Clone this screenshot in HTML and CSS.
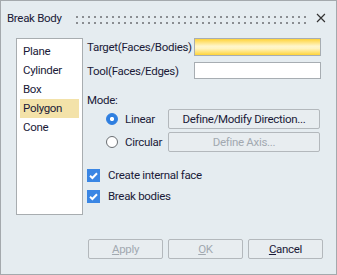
FILE: index.html
```html
<!DOCTYPE html>
<html lang="en">
<head>
    <meta charset="UTF-8">
    <title>Break Body</title>
    <link rel="stylesheet" href="styles.css">
</head>
<body>
    <div class="dialog">
        <div class="titlebar">
            <span class="title">Break Body</span>
            <svg class="grip" width="232" height="8">
                <defs>
                    <pattern id="dots" width="6" height="6" patternUnits="userSpaceOnUse">
                        <rect x="0" y="0" width="2" height="2" fill="#8a8d91"/>
                    </pattern>
                </defs>
                <rect width="232" height="8" fill="url(#dots)"/>
            </svg>
            <svg class="close" width="10" height="10" viewBox="0 0 10 10">
                <path d="M1 1 L9 9 M9 1 L1 9" stroke="#333" stroke-width="1.2" fill="none"/>
            </svg>
        </div>

        <div class="main">
            <ul class="shape-list">
                <li>Plane</li>
                <li>Cylinder</li>
                <li>Box</li>
                <li class="selected">Polygon</li>
                <li>Cone</li>
            </ul>

            <div class="panel">
                <div class="fields">
                    <label>Target(Faces/Bodies)</label>
                    <div class="input active"></div>
                    <label>Tool(Faces/Edges)</label>
                    <div class="input"></div>
                </div>

                <div class="mode-label">Mode:</div>
                <div class="mode-row">
                    <span class="radio checked"></span>
                    <span class="radio-text">Linear</span>
                    <button class="btn wide">Define/Modify Direction...</button>
                </div>
                <div class="mode-row">
                    <span class="radio"></span>
                    <span class="radio-text">Circular</span>
                    <button class="btn wide" disabled>Define Axis...</button>
                </div>

                <div class="check-row first">
                    <span class="checkbox"></span>
                    <span>Create internal face</span>
                </div>
                <div class="check-row">
                    <span class="checkbox"></span>
                    <span>Break bodies</span>
                </div>
            </div>
        </div>

        <div class="footer">
            <button class="btn" disabled><u>A</u>pply</button>
            <button class="btn" disabled><u>O</u>K</button>
            <button class="btn"><u>C</u>ancel</button>
        </div>
    </div>
</body>
</html>
```

FILE: styles.css
```css
body {
    margin: 0;
    font-family: Roboto, "Liberation Sans", sans-serif;
    font-size: 11.5px;
    letter-spacing: -0.3px;
    color: #1a1a38;
}
.dialog {
    width: 337px;
    height: 275px;
    box-sizing: border-box;
    border: 1px solid #a4a9ad;
    background: #e5ecf0;
}
.titlebar {
    height: 34px;
    display: flex;
    align-items: center;
    padding: 0 10px 0 6px;
}
.title {
    width: 70px;
}
.grip {
    display: block;
    margin-top: 3px;
    margin-right: 10px;
}
.close {
    display: block;
}
.main {
    display: flex;
    gap: 4px;
    padding: 3px 15px 0 15px;
    height: 177px;
}
.shape-list {
    list-style: none;
    margin: 0;
    padding: 3px 3px;
    width: 67px;
    box-sizing: border-box;
    background: #fff;
    border: 1px solid #a8adb0;
}
.shape-list li {
    height: 19px;
    line-height: 19px;
    padding-left: 3px;
}
.shape-list li.selected {
    background: #f3e2a9;
}
.panel {
    flex: 1;
}
.fields {
    display: grid;
    grid-template-columns: 107px 1fr;
    row-gap: 6px;
    align-items: center;
}
.input {
    height: 17px;
    box-sizing: border-box;
    border: 1px solid #a7adb2;
    background: #fff;
}
.input.active {
    height: 18px;
    background: linear-gradient(#ffd33a, #fff6cc 45%, #fff3c0 60%, #ffd438);
}
.mode-label {
    margin-top: 14px;
    height: 14px;
}
.mode-row {
    display: flex;
    align-items: center;
    padding-left: 19px;
    margin-top: 2px;
    height: 20px;
}
.mode-row + .mode-row {
    margin-top: 3px;
}
.radio {
    width: 12px;
    height: 12px;
    box-sizing: border-box;
    border-radius: 50%;
    border: 1px solid #6a6e72;
    background: #fff;
}
.radio.checked {
    border: 1px solid #2f7fe0;
    background: radial-gradient(#ffffff 1.8px, #2f7fe0 2.4px);
}
.radio-text {
    width: 43px;
    margin-left: 7px;
}
.btn {
    font-family: Roboto, "Liberation Sans", sans-serif;
    font-size: 11.5px;
    letter-spacing: -0.3px;
    color: #1a1a38;
    height: 20px;
    width: 75px;
    padding: 0;
    border: 1px solid #b3b8bc;
    border-radius: 2px;
    background: #e8edf0;
}
.btn:disabled {
    color: #a2a9b0;
}
.btn.wide {
    width: 152px;
}
.check-row {
    display: flex;
    align-items: center;
    height: 14px;
    margin-top: 7px;
}
.check-row.first {
    margin-top: 16px;
}
.checkbox {
    width: 13px;
    height: 13px;
    margin-right: 8px;
    background: #3a86e4 url("data:image/svg+xml,%3Csvg xmlns='http://www.w3.org/2000/svg' width='13' height='13'%3E%3Cpath d='M3 6.8 L5.4 9 L10 4.2' stroke='white' stroke-width='2' fill='none'/%3E%3C/svg%3E");
}
.footer {
    display: flex;
    gap: 5px;
    padding-left: 87px;
    margin-top: 24px;
}
```
